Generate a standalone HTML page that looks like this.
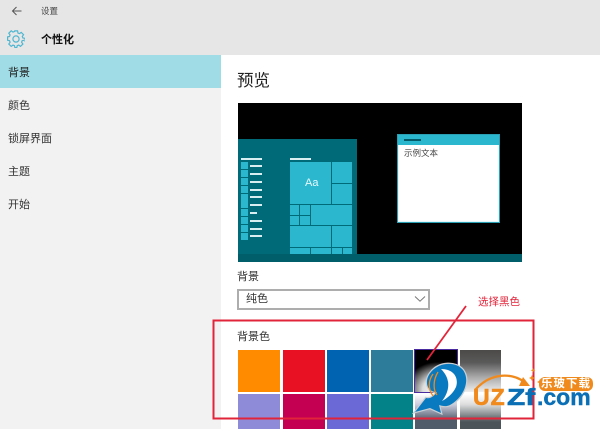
<!DOCTYPE html>
<html><head><meta charset="utf-8">
<style>
html,body{margin:0;padding:0;background:#fff}
#p{position:relative;width:600px;height:429px;overflow:hidden;background:#fff;font-family:"Liberation Sans","Noto Sans CJK SC",sans-serif;filter:blur(.35px)}
#p div{position:absolute}
.t{white-space:nowrap;line-height:1}
.s{background:#2bb8cf}
.i{background:#2bb8cf}
.l{background:#d8eef1;height:1.5px}
.sw{width:42px;height:42px}
</style></head><body>
<div id="p">
<div style="left:0;top:0;width:600px;height:55px;background:#e6e6e6"></div>
<div style="left:0;top:55px;width:221px;height:374px;background:#f2f2f2"></div>
<div style="left:0;top:55px;width:221px;height:33px;background:#9fdce5"></div>

<svg style="position:absolute;left:11px;top:5px" width="12" height="12" viewBox="0 0 12 12"><path d="M10.5 6H1.5M5.5 2L1.5 6L5.5 10" fill="none" stroke="#555" stroke-width="1"/></svg>
<div class="t" style="left:41px;top:7px;font-size:8.5px;color:#444">设置</div>
<svg style="position:absolute;left:7px;top:30px" width="18" height="18" viewBox="0 0 18 18"><path d="M7.3 1.5h3.4l.4 2.2 1.5.6 1.8-1.3 2.4 2.4-1.3 1.8.6 1.5 2.2.4v3.4" transform="translate(.1 -.6) scale(.98)" fill="none" stroke="#4fb6d0" stroke-width="1.2"/><path d="M16.5 10.7l-1.9.4-.6 1.5 1.3 1.8-2.4 2.4-1.8-1.3-1.5.6-.4 1.9H7.3l-.4-1.9-1.5-.6-1.8 1.3-2.4-2.4 1.3-1.8-.6-1.5-1.9-.4V7.3l1.9-.4.6-1.5-1.3-1.8 2.4-2.4 1.8 1.3 1.5-.6.4-.4" fill="none" stroke="#4fb6d0" stroke-width="1.2" transform="translate(.6 -.4)"/><circle cx="9" cy="9" r="3.1" fill="none" stroke="#4fb6d0" stroke-width="1.2"/></svg>
<div class="t" style="left:41px;top:34.5px;font-size:11px;font-weight:bold;color:#111">个性化</div>

<div class="t" style="left:8px;top:67.5px;font-size:11px;color:#222">背景</div>
<div class="t" style="left:8px;top:100.5px;font-size:11px;color:#333">颜色</div>
<div class="t" style="left:8px;top:133.5px;font-size:11px;color:#333">锁屏界面</div>
<div class="t" style="left:8px;top:166.5px;font-size:11px;color:#333">主题</div>
<div class="t" style="left:8px;top:199.5px;font-size:11px;color:#333">开始</div>

<div class="t" style="left:237px;top:73px;font-size:16.5px;color:#222">预览</div>

<div style="left:238px;top:103px;width:284px;height:159px;background:#000"></div>
<div style="left:238px;top:139px;width:119px;height:115px;background:#006a78"></div>
<div style="left:238px;top:254px;width:284px;height:8px;background:#005e6b"></div>
<div class="l" style="left:241px;top:158px;width:21px"></div>
<div class="l" style="left:290px;top:158px;width:21px"></div>

<div class="s" style="left:241px;top:162px;width:7px;height:7px"></div><div class="l" style="left:250px;top:165px;width:12px"></div>
<div class="s" style="left:241px;top:170px;width:7px;height:7px"></div><div class="l" style="left:250px;top:173px;width:12px"></div>
<div class="s" style="left:241px;top:178px;width:7px;height:7px"></div><div class="l" style="left:250px;top:181px;width:12px"></div>
<div class="s" style="left:241px;top:186px;width:7px;height:7px"></div><div class="l" style="left:250px;top:189px;width:12px"></div>
<div class="s" style="left:241px;top:194px;width:7px;height:7px"></div><div class="l" style="left:250px;top:196px;width:12px"></div>
<div class="s" style="left:241px;top:201px;width:7px;height:7px"></div><div class="l" style="left:250px;top:204px;width:12px"></div>
<div class="s" style="left:241px;top:209px;width:7px;height:7px"></div><div class="l" style="left:250px;top:212px;width:7px"></div>
<div class="s" style="left:241px;top:217px;width:7px;height:7px"></div><div class="l" style="left:250px;top:220px;width:12px"></div>
<div class="s" style="left:241px;top:225px;width:7px;height:7px"></div><div class="l" style="left:250px;top:228px;width:12px"></div>
<div class="s" style="left:241px;top:233px;width:7px;height:7px"></div><div class="l" style="left:250px;top:235px;width:12px"></div>

<div class="i" style="left:290px;top:162px;width:41px;height:42px"></div>
<div class="t" style="left:305px;top:178px;font-size:11px;color:#e8f8fb">Aa</div>
<div class="i" style="left:332px;top:162px;width:20px;height:21px"></div>
<div class="i" style="left:332px;top:184px;width:20px;height:20px"></div>
<div class="i" style="left:290px;top:205px;width:9px;height:10px"></div>
<div class="i" style="left:300px;top:205px;width:10px;height:10px"></div>
<div class="i" style="left:290px;top:216px;width:9px;height:9px"></div>
<div class="i" style="left:300px;top:216px;width:10px;height:9px"></div>
<div class="i" style="left:311px;top:205px;width:41px;height:20px"></div>
<div class="i" style="left:290px;top:226px;width:41px;height:21px"></div>
<div class="i" style="left:332px;top:226px;width:20px;height:21px"></div>
<div class="i" style="left:290px;top:248px;width:20px;height:6px"></div>
<div class="i" style="left:311px;top:248px;width:20px;height:6px"></div>
<div class="i" style="left:332px;top:248px;width:10px;height:6px"></div>
<div class="i" style="left:343px;top:248px;width:9px;height:6px"></div>

<div style="left:397px;top:134px;width:103px;height:89px;background:#2a9fb3"></div>
<div style="left:398px;top:145px;width:101px;height:77px;background:#e2f7fa"></div>
<div style="left:399px;top:145px;width:99px;height:76px;background:#fff"></div>
<div style="left:398px;top:135px;width:101px;height:10px;background:#2bb8cf"></div>
<div style="left:404px;top:139px;width:17px;height:1.5px;background:#035a68"></div>
<div class="t" style="left:404px;top:149px;font-size:8.5px;color:#444">示例文本</div>

<div class="t" style="left:237px;top:272px;font-size:11px;color:#333">背景</div>
<div style="left:237px;top:289px;width:189px;height:17px;border:2px solid #adadad;background:#fff"></div>
<div class="t" style="left:246px;top:293.5px;font-size:11px;color:#333">纯色</div>
<svg style="position:absolute;left:414px;top:295px" width="12" height="8" viewBox="0 0 12 8"><path d="M1 1.5L6 6.2L11 1.5" fill="none" stroke="#777" stroke-width="1"/></svg>

<div class="t" style="left:237px;top:332px;font-size:11px;color:#333">背景色</div>
<div class="sw" style="left:238px;top:350px;background:#ff8c00"></div>
<div class="sw" style="left:283px;top:350px;background:#e81123"></div>
<div class="sw" style="left:327px;top:350px;background:#0063b1"></div>
<div class="sw" style="left:371px;top:350px;background:#2d7d9a"></div>
<div style="left:414px;top:349px;width:42px;height:42px;border:1px solid #4a2ca0;background:radial-gradient(ellipse 34px 28px at 55% 95%,#fff 0,#ddd 45%,#555 80%,#000 100%)"></div>
<div class="sw" style="left:460px;top:350px;width:41px;background:linear-gradient(#4c4a48 0,#5a5a5a 30%,#aaa 65%,#eee 100%)"></div>
<div class="sw" style="left:238px;top:394px;height:35px;background:#8e8cd8"></div>
<div class="sw" style="left:283px;top:394px;height:35px;background:#c30052"></div>
<div class="sw" style="left:327px;top:394px;height:35px;background:#6b69d6"></div>
<div class="sw" style="left:371px;top:394px;height:35px;background:#038387"></div>
<div class="sw" style="left:415px;top:394px;height:35px;background:linear-gradient(#fff 0,#ccd 30%,#515c6b 75%)"></div>
<div class="sw" style="left:460px;top:394px;width:41px;height:35px;background:linear-gradient(#fff 0,#ddd 30%,#4a5459 80%)"></div>

<svg style="position:absolute;left:0;top:0" width="600" height="429" viewBox="0 0 600 429">
<rect x="213.5" y="320.5" width="320" height="98" fill="none" stroke="#e2243a" stroke-width="2"/>
<path d="M466 306L427 360" stroke="#e2243a" stroke-width="1.8" fill="none"/>
<path d="M415 412L426 398C431 399 434 396 437 392C426 392 424 380 431 372C439 362 456 361 463 370C471 381 463 398 450 405C446 407 442 406 439 405L441 413L430 408Z" fill="#0a7ac0" stroke="#c9cfd3" stroke-width="2.4" paint-order="stroke"/>
<path d="M441 369C454 369 459 378 456 387C453 394 446 399 442 401C449 392 452 380 441 369Z" fill="#fff"/>
<path d="M433 374C428 381 428 389 433 396M438 372C433 380 433 390 437 395" fill="none" stroke="#f08a1c" stroke-width="1.3"/>
<path d="M475 390C491 372 513 372 527 384" fill="none" stroke="#f08a1c" stroke-width="2.2"/>
<path d="M523 377L530 386L519 386Z" fill="#f08a1c"/>
<path d="M532 375l1 2 2 1-2 1-1 2-1-2-2-1 2-1ZM540 379l1 2 2 1-2 1-1 2-1-2-2-1 2-1ZM533 368l.7 1.6 1.6.7-1.6.7-.7 1.6-.7-1.6-1.6-.7 1.6-.7Z" fill="#f08a1c"/>
<rect x="539" y="377" width="54" height="14" rx="6" fill="#f08a1c"/>
</svg>

<div class="t" style="left:478px;top:297px;font-size:10.5px;color:#e2243a">选择黑色</div>
<div class="t" style="left:541px;top:379px;font-size:11.5px;font-weight:bold;color:#fff;letter-spacing:1px">乐玻下载</div>
<div class="t" style="left:473px;top:386px;font-size:23px;font-weight:bold;color:#f08a1c;letter-spacing:1px;-webkit-text-stroke:.6px #f08a1c">UZ</div>
<div class="t" style="left:507px;top:386px;font-size:23px;font-weight:bold;color:#0a6fb5;transform:scaleX(1.3);transform-origin:0 0;-webkit-text-stroke:.6px #0a6fb5">Zf</div>
<div class="t" style="left:537px;top:386px;font-size:23px;font-weight:bold;color:#0a6fb5;-webkit-text-stroke:.4px #0a6fb5">.com</div>
</div>
</body></html>
